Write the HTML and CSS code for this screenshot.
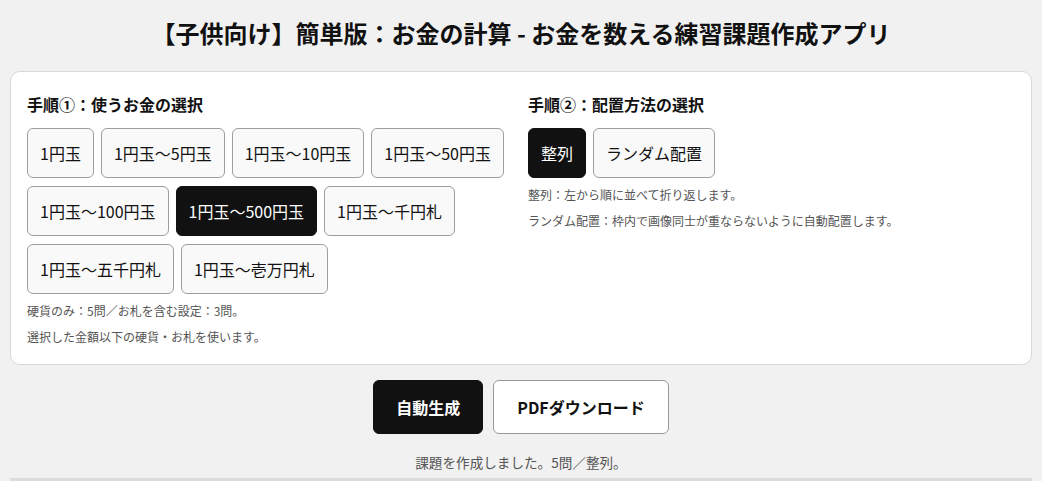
FILE: index.html
```html
<!DOCTYPE html>
<html lang="ja">
<head>
<meta charset="utf-8">
<title>お金の計算</title>
<link rel="stylesheet" href="styles.css">
</head>
<body>
<div class="page">
  <h1 class="title">【子供向け】簡単版：お金の計算 - お金を数える練習課題作成アプリ</h1>
  <section class="panel">
    <div class="step">
      <h2 class="step-title">手順①：使うお金の選択</h2>
      <div class="options">
        <button class="opt">1円玉</button>
        <button class="opt">1円玉～5円玉</button>
        <button class="opt">1円玉～10円玉</button>
        <button class="opt">1円玉～50円玉</button>
        <button class="opt">1円玉～100円玉</button>
        <button class="opt selected">1円玉～500円玉</button>
        <button class="opt">1円玉～千円札</button>
        <button class="opt">1円玉～五千円札</button>
        <button class="opt">1円玉～壱万円札</button>
      </div>
      <p class="note">硬貨のみ：5問／お札を含む設定：3問。</p>
      <p class="note">選択した金額以下の硬貨・お札を使います。</p>
    </div>
    <div class="step">
      <h2 class="step-title">手順②：配置方法の選択</h2>
      <div class="options">
        <button class="opt selected">整列</button>
        <button class="opt">ランダム配置</button>
      </div>
      <p class="note">整列：左から順に並べて折り返します。</p>
      <p class="note">ランダム配置：枠内で画像同士が重ならないように自動配置します。</p>
    </div>
  </section>
  <div class="actions">
    <button class="action primary">自動生成</button>
    <button class="action wide">PDFダウンロード</button>
  </div>
  <p class="status">課題を作成しました。5問／整列。</p>
  <div class="preview"></div>
</div>
</body>
</html>
```

FILE: styles.css
```css
* { box-sizing: border-box; }
html, body {
  margin: 0;
  padding: 0;
  background: #f1f1f1;
  font-family: "Noto Sans CJK JP", "Noto Sans", sans-serif;
  color: #111;
  overflow: hidden;
}
.page {
  padding: 0 10px;
}
.title {
  margin: 0;
  padding: 15px 0 20px;
  font-size: 24px;
  line-height: 36px;
  font-weight: 700;
  text-align: center;
  color: #111;
}
.panel {
  background: #fff;
  border: 1px solid #d8d8d8;
  border-radius: 10px;
  padding: 20px 16px 18px;
  display: grid;
  grid-template-columns: 1fr 1fr;
  column-gap: 14px;
}
.step-title {
  margin: 0 0 12px;
  font-size: 16px;
  line-height: 24px;
  font-weight: 700;
}
.options {
  display: flex;
  flex-wrap: wrap;
  column-gap: 7px;
  row-gap: 8px;
}
.opt {
  font-family: inherit;
  font-size: 16px;
  line-height: 24px;
  padding: 12px 12px;
  border: 1px solid #9e9e9e;
  border-radius: 6px;
  background: #f9f9f9;
  color: #111;
  cursor: pointer;
}
.opt.selected {
  background: #111;
  border-color: #111;
  color: #fff;
}
.note {
  margin: 8px 0 0;
  font-size: 12px;
  line-height: 18px;
  color: #555;
}
.actions {
  display: flex;
  justify-content: center;
  gap: 10px;
  margin-top: 15px;
}
.action {
  font-family: inherit;
  font-size: 16px;
  font-weight: 700;
  line-height: 24px;
  padding: 14px 22px;
  border: 1px solid #999;
  border-radius: 6px;
  background: #fff;
  color: #111;
  cursor: pointer;
}
.action.wide {
  padding: 14px 23px;
}
.action.primary {
  background: #111;
  border-color: #111;
  color: #fff;
}
.status {
  margin: 18px 0 0;
  text-align: center;
  font-size: 13.6px;
  line-height: 20px;
  color: #555;
}
.preview {
  margin-top: 6px;
  height: 300px;
  background: #dcdcdc;
}
```
